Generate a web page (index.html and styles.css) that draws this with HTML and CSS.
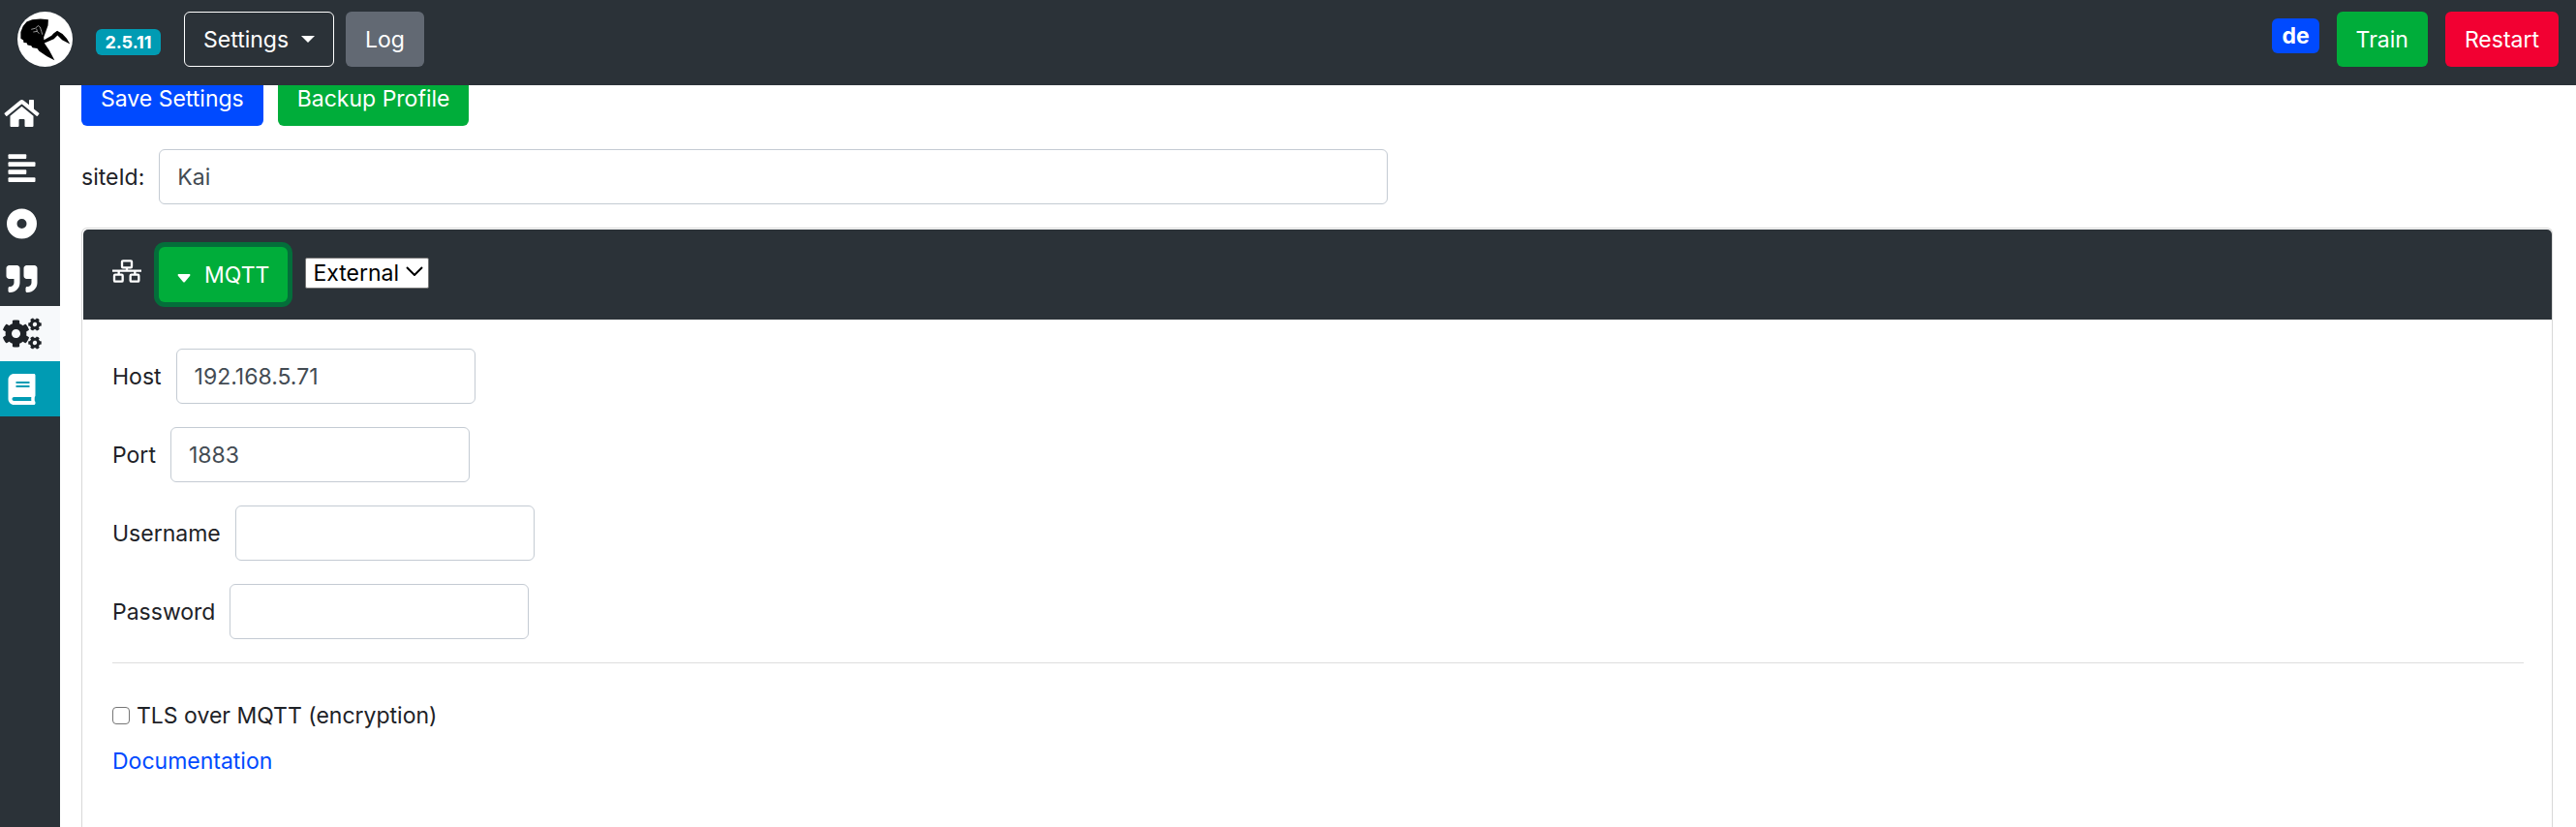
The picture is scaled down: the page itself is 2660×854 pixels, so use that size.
FILE: index.html
```html
<!DOCTYPE html>
<html lang="en">
<head>
<meta charset="utf-8">
<title>Settings</title>
<link rel="stylesheet" href="styles.css">
</head>
<body>
<svg class="defs" aria-hidden="true">
  <symbol id="cog" viewBox="0 0 512 512"><path d="M487.4 315.7l-42.6-24.6c4.3-23.2 4.3-47 0-70.2l42.6-24.6c4.9-2.8 7.1-8.6 5.5-14-11.1-35.6-30-67.8-54.7-94.6-3.8-4.1-10-5.1-14.8-2.3L380.8 110c-17.9-15.4-38.5-27.3-60.8-35.1V25.8c0-5.6-3.9-10.5-9.4-11.7-36.7-8.2-74.3-7.8-109.2 0-5.5 1.2-9.4 6.1-9.4 11.7V75c-22.2 7.9-42.8 19.8-60.8 35.1L88.7 85.5c-4.9-2.8-11-1.9-14.8 2.3-24.7 26.7-43.6 58.9-54.7 94.6-1.7 5.4.6 11.2 5.5 14L67.3 221c-4.3 23.2-4.3 47 0 70.2l-42.6 24.6c-4.9 2.8-7.1 8.6-5.5 14 11.1 35.6 30 67.8 54.7 94.6 3.8 4.1 10 5.1 14.8 2.3l42.6-24.6c17.9 15.4 38.5 27.3 60.8 35.1v49.2c0 5.6 3.9 10.5 9.4 11.7 36.7 8.2 74.3 7.8 109.2 0 5.5-1.2 9.4-6.1 9.4-11.7v-49.2c22.2-7.9 42.8-19.8 60.8-35.1l42.6 24.6c4.9 2.8 11 1.9 14.8-2.3 24.7-26.7 43.6-58.9 54.7-94.6 1.5-5.5-.7-11.3-5.6-14.1zM256 336c-44.1 0-80-35.9-80-80s35.9-80 80-80 80 35.9 80 80-35.9 80-80 80z"/></symbol>
</svg>

<header class="topbar">
  <a class="brand" href="#" aria-label="Home">
    <svg class="logo" viewBox="0 0 168 168">
      <circle cx="84" cy="84" r="84" fill="#fff"/>
      <path d="M10 82L10 62L17 44L28 31L45 24L70 22L94 24L93 42L86 62L80 78L81 86L104 73L110 66L121 58L137 68L150 82L160 99L136 86L122 72L111 83L82 96L97 118L113 148L90 136L66 120L60 112L46 110L42 104L31 102L28 95L19 94L18 87Z" fill="#000"/>
      <path d="M42 54L54 51L63 43L69 47L73 60L76 70M48 62L60 60L66 67M58 52L60 60" fill="none" stroke="#ddd" stroke-width="2"/>
    </svg>
  </a>
  <span class="badge badge-info">2.5.11</span>
  <nav class="topnav">
    <button class="btn btn-outline" type="button">Settings<span class="caret"></span></button>
    <button class="btn btn-secondary" type="button">Log</button>
  </nav>
  <div class="actions">
    <a class="badge badge-lang" href="#">de</a>
    <button class="btn btn-success" type="button">Train</button>
    <button class="btn btn-danger" type="button">Restart</button>
  </div>
</header>

<nav class="sidebar" aria-label="Sections">
  <a class="side-item" href="#" aria-label="Home"><svg class="side-icon" viewBox="0 0 576 512"><path d="M280.37 148.26L96 300.11V464a16 16 0 0 0 16 16l112.06-.29a16 16 0 0 0 15.92-16V368a16 16 0 0 1 16-16h64a16 16 0 0 1 16 16v95.64a16 16 0 0 0 16 16.05L464 480a16 16 0 0 0 16-16V300L295.67 148.26a12.19 12.19 0 0 0-15.3 0zM571.6 251.47L488 182.56V44.05a12 12 0 0 0-12-12h-56a12 12 0 0 0-12 12v72.61L318.47 43a48 48 0 0 0-61 0L4.34 251.47a12 12 0 0 0-1.6 16.9l25.5 31A12 12 0 0 0 45.15 301l235.22-193.74a12.19 12.19 0 0 1 15.3 0L530.9 301a12 12 0 0 0 16.9-1.6l25.5-31a12 12 0 0 0-1.7-16.93z"/></svg></a>
  <a class="side-item" href="#" aria-label="Sentences"><svg class="side-icon" viewBox="0 0 448 512"><rect x="0" y="20" width="300" height="74" rx="14"/><rect x="0" y="148" width="448" height="74" rx="14"/><rect x="0" y="276" width="300" height="74" rx="14"/><rect x="0" y="404" width="448" height="74" rx="14"/></svg></a>
  <a class="side-item" href="#" aria-label="Slots"><svg class="side-icon" viewBox="0 0 512 512"><path fill-rule="evenodd" d="M256 8a248 248 0 1 0 0 496a248 248 0 1 0 0-496zm0 168a80 80 0 1 1 0 160a80 80 0 1 1 0-160z"/></svg></a>
  <a class="side-item" href="#" aria-label="Words"><svg class="side-icon" viewBox="0 0 512 512"><path d="M464 32H336c-26.5 0-48 21.5-48 48v128c0 26.5 21.5 48 48 48h80v64c0 35.3-28.7 64-64 64h-8c-13.3 0-24 10.7-24 24v48c0 13.3 10.7 24 24 24h8c88.4 0 160-71.6 160-160V80c0-26.5-21.5-48-48-48zm-288 0H48C21.5 32 0 53.5 0 80v128c0 26.5 21.5 48 48 48h80v64c0 35.3-28.7 64-64 64h-8c-13.3 0-24 10.7-24 24v48c0 13.3 10.7 24 24 24h8c88.4 0 160-71.6 160-160V80c0-26.5-21.5-48-48-48z"/></svg></a>
  <a class="side-item side-active" href="#" aria-label="Settings"><svg class="side-icon" viewBox="0 0 45 32"><use href="#cog" x="2" y="1" width="29" height="29"/><use href="#cog" x="29" y="-1" width="14" height="14" transform="rotate(30 36 6)"/><use href="#cog" x="29" y="18" width="14" height="14" transform="rotate(30 36 25)"/></svg></a>
  <a class="side-item side-info" href="#" aria-label="Documentation"><svg class="side-icon" viewBox="0 0 448 512"><path d="M448 360V24c0-13.3-10.7-24-24-24H96C43 0 0 43 0 96v320c0 53 43 96 96 96h328c13.3 0 24-10.7 24-24v-16c0-7.5-3.5-14.3-8.9-18.7-4.2-15.4-4.2-59.3 0-74.7 5.4-4.3 8.9-11.1 8.9-18.6zM128 134c0-3.3 2.7-6 6-6h212c3.3 0 6 2.7 6 6v20c0 3.3-2.7 6-6 6H134c-3.3 0-6-2.7-6-6v-20zm0 64c0-3.3 2.7-6 6-6h212c3.3 0 6 2.7 6 6v20c0 3.3-2.7 6-6 6H134c-3.3 0-6-2.7-6-6v-20zm253.4 250H96c-17.7 0-32-14.3-32-32 0-17.6 14.4-32 32-32h285.4c-1.9 17.1-1.9 46.9 0 64z"/></svg></a>
</nav>

<main class="content">
  <div class="button-row">
    <button class="btn btn-primary" type="button">Save Settings</button>
    <button class="btn btn-success" type="button">Backup Profile</button>
  </div>
  <div class="field site-field">
    <label for="site">siteId:</label>
    <input class="input" id="site" type="text" value="Kai">
  </div>
  <section class="card">
    <div class="card-header">
      <svg class="network" viewBox="0 0 90 72" fill="none" stroke="#fff" stroke-width="7"><rect x="30" y="4" width="30" height="21" rx="3"/><path d="M45 25v10M0 35h90M20 35v10M70 35v10"/><rect x="6" y="47" width="26" height="21" rx="3"/><rect x="56" y="47" width="26" height="21" rx="3"/></svg>
      <button class="btn btn-success btn-focus" type="button"><svg class="sort" viewBox="0 0 14 9"><path d="M1 0H13Q14 1 13 2L8 8Q7 9 6 8L1 2Q0 1 1 0Z" fill="#fff"/></svg>MQTT</button>
      <span class="select-wrap">
        <select class="select" aria-label="MQTT mode"><option>External</option><option>Internal</option></select>
        <svg class="chevron" viewBox="0 0 18 10" fill="none" stroke="#000" stroke-width="2"><path d="M1 1l8 8 8-8"/></svg>
      </span>
    </div>
    <div class="card-body">
      <div class="field"><label for="host">Host</label><input class="input" id="host" type="text" value="192.168.5.71"></div>
      <div class="field"><label for="port">Port</label><input class="input" id="port" type="text" value="1883"></div>
      <div class="field"><label for="user">Username</label><input class="input" id="user" type="text"></div>
      <div class="field"><label for="pass">Password</label><input class="input" id="pass" type="password"></div>
      <hr class="rule">
      <div class="check"><input class="checkbox" id="tls" type="checkbox"><label for="tls">TLS over MQTT (encryption)</label></div>
      <a class="link" href="#">Documentation</a>
    </div>
  </section>
</main>
</body>
</html>
```

FILE: styles.css
```css
* { box-sizing: border-box; }
body {
  margin: 0;
  min-height: 100vh;
  display: flex;
  flex-direction: column;
  background: #fff;
  color: #1e2227;
  font-family: Inter, "Liberation Sans", sans-serif;
  font-size: 23px;
  line-height: 36px;
}
.defs { position: absolute; width: 0; height: 0; }
a { text-decoration: none; }

.topbar {
  position: fixed;
  top: 0;
  left: 0;
  right: 0;
  z-index: 2;
  height: 88px;
  padding: 12px 18px 19px;
  display: flex;
  align-items: center;
  background: #2b3238;
}
.brand { display: flex; margin-right: 24px; }
.logo { width: 57px; height: 57px; }
.topnav { display: flex; gap: 12px; margin-left: 24px; }
.actions { display: flex; align-items: center; gap: 18px; margin-left: auto; }

.badge {
  border-radius: 6px;
  color: #fff;
  font-weight: 700;
  text-align: center;
}
.badge-info { min-width: 67px; margin-top: 6px; padding: 0 7px; background: #009bb3; font-size: 18px; line-height: 27px; }
.badge-lang { margin-bottom: 7px; padding: 0 10px; background: #004aff; line-height: 36px; }

.btn {
  display: inline-flex;
  align-items: center;
  height: 57px;
  padding: 0 20px;
  border: 0;
  border-radius: 6px;
  color: #fff;
  font: inherit;
}
.btn-outline { padding: 0 19px; border: 1px solid #fff; background: transparent; }
.btn-secondary { background: #626973; }
.btn-success { background: #00ad3a; }
.btn-danger { background: #f20032; }
.btn-primary { background: #004aff; }
.btn-focus { padding: 0 19px; box-shadow: 0 0 0 5px #046e3a; }
.caret {
  margin-left: 13px;
  border: 7px solid transparent;
  border-top-color: #fff;
  border-bottom: 0;
}

.sidebar {
  position: fixed;
  top: 88px;
  bottom: 0;
  left: 0;
  width: 62px;
  background: #2b3238;
}
.side-item { display: flex; align-items: center; height: 57px; color: #fff; }
.side-icon { width: 45px; height: 32px; fill: currentColor; overflow: visible; }
.side-active { background: #f7f9fb; color: #1e2227; }
.side-info { background: #009bb3; }

.content {
  flex: 1;
  display: flex;
  flex-direction: column;
  gap: 24px;
  margin-left: 62px;
  padding: 73px 24px 0 22px;
}
.button-row { display: flex; gap: 15px; }
.field { display: flex; align-items: center; gap: 15px; }
.input {
  width: 309px;
  height: 57px;
  padding: 0 18px;
  border: 1px solid #c4cbd3;
  border-radius: 6px;
  background: #fff;
  color: #434b53;
  font: inherit;
}
.site-field { width: 52.85%; }
.site-field .input { flex: 1; }

.card {
  flex: 1;
  padding: 1px 0 0 1px;
  border: 1px solid #d8d8d8;
  border-bottom: 0;
  border-radius: 6px 6px 0 0;
}
.card-header {
  display: flex;
  padding: 18px 30px;
  border-radius: 5px 5px 0 0;
  background: #2b3238;
}
.network { width: 30px; height: 24px; margin: 13px 18px 0 0; }
.sort { width: 14px; height: 9px; margin: 8px 14px 0 0; }
.select-wrap { position: relative; height: 32px; margin: 9px 0 0 18px; }
.select {
  width: 128px;
  height: 32px;
  padding: 0 7px;
  appearance: none;
  border: 1px solid #767676;
  border-radius: 2px;
  background: #fff;
  color: #000;
  font: inherit;
  line-height: 30px;
}
.chevron { position: absolute; top: 11px; right: 6px; width: 18px; height: 10px; pointer-events: none; }

.card-body {
  display: flex;
  flex-direction: column;
  align-items: flex-start;
  gap: 24px;
  padding: 30px 29px 30px 30px;
}
.rule { width: 100%; height: 1px; margin: 0 0 12px; border: 0; background: #dedede; }
.check { display: flex; align-items: center; gap: 7px; margin-bottom: -13px; }
.checkbox {
  width: 18px;
  height: 18px;
  margin: 0;
  appearance: none;
  border: 1px solid #767676;
  border-radius: 4px;
  background: #fff;
}
.link { color: #004aff; }
```
